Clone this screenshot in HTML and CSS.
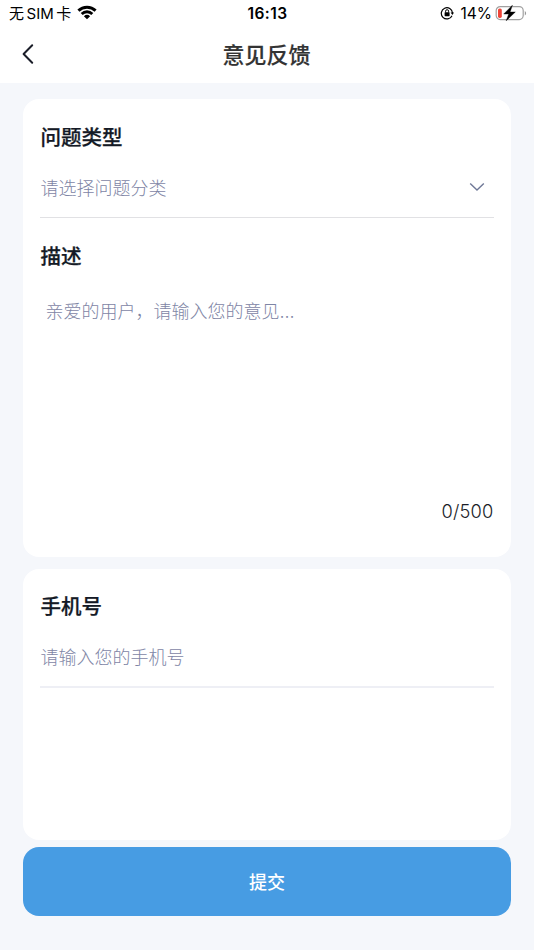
FILE: index.html
```html
<!DOCTYPE html>
<html lang="zh-CN">
<head>
<meta charset="utf-8">
<title>意见反馈</title>
<link rel="stylesheet" href="styles.css">
</head>
<body>
<header class="top">
  <div class="status">
    <div class="status-left"><span class="carrier"><span>无</span><span>SIM</span><span>卡</span></span>
      <svg class="wifi" width="20" height="15" viewBox="0 0 20 15"><path d="M0.4 4.6a13.8 13.8 0 0 1 19.2 0l-2 2.1a11 11 0 0 0-15.2 0zM3.7 7.9a9.1 9.1 0 0 1 12.6 0l-2 2.1a6.2 6.2 0 0 0-8.6 0zM6.9 11.2a4.5 4.5 0 0 1 6.2 0L10 14.3z"/></svg>
    </div>
    <time class="clock">16:13</time>
    <div class="status-right">
      <svg class="lock" width="14" height="14" viewBox="0 0 14 14"><path d="M12 9.7A5.6 5.6 0 1 1 12.5 7" fill="none" stroke="#000" stroke-width="1.2"/><path d="M10.6 6.4h3.4l-1.6 2.5z"/><rect x="4.6" y="6.2" width="5" height="4" rx=".6"/><path d="M5.6 6.5V5.2a1.5 1.5 0 0 1 3 0v1.3" fill="none" stroke="#000"/></svg>
      <span class="percent">14%</span>
      <svg class="battery" width="32" height="16" viewBox="0 0 32 16"><rect x="1.2" y="1.6" width="27" height="13" rx="4" fill="none" stroke="#a0a0a0" stroke-width="1.2"/><rect x="3" y="3.5" width="3.8" height="9.4" rx="1.6" fill="#ef4438"/><path d="M29.8 6v4.4c1.8-.7 1.8-3.7 0-4.4z" fill="#999"/><path d="M17.4 .2L8.7 9h5L11.2 15.8 20.3 7h-5.2z" stroke="#000" stroke-width=".4"/></svg>
    </div>
  </div>
  <div class="nav">
    <svg class="back" width="14" height="22" viewBox="0 0 14 22"><path d="M12.2 2.2L3.6 11l8.6 8.8" fill="none" stroke="#1b1e29" stroke-width="2" stroke-linecap="round" stroke-linejoin="round"/></svg>
    <h1>意见反馈</h1>
  </div>
</header>
<main>
  <section class="card card-main">
    <h2>问题类型</h2>
    <div class="field"><span>请选择问题分类</span><svg class="chevron" width="16" height="10" viewBox="0 0 16 10"><path d="M1.2 1.5l6.8 6.6 6.8-6.6" fill="none" stroke="#6f7897" stroke-width="1.4"/></svg></div>
    <h2 class="desc-title">描述</h2>
    <div class="textarea">亲爱的用户，请输入您的意见...</div>
    <div class="count">0/500</div>
  </section>
  <section class="card card-phone">
    <h2>手机号</h2>
    <div class="field field-phone">请输入您的手机号</div>
  </section>
  <button class="submit">提交</button>
</main>
</body>
</html>
```
FILE: styles.css
```css
* { box-sizing: border-box; }
body { margin: 0; height: 950px; background: #f5f7fb; color: #1b1e29; font-family: Inter, "Noto Sans CJK SC", sans-serif; }
svg { display: block; }
.top { height: 83px; background: #fff; color: #000; }
.status { height: 28px; display: grid; grid-template-columns: 1fr auto 1fr; align-items: center; padding: 0 8px 0 9px; font-size: 15px; line-height: 28px; }
.status-left, .status-right { display: flex; align-items: center; }
.status-left { gap: 6px; }
.carrier { display: flex; gap: 2.5px; }
.wifi { margin-bottom: 3px; }
.lock { margin-bottom: 2px; }
.status-right { justify-content: flex-end; gap: 6px; }
.clock { font-weight: 600; font-size: 15.5px; letter-spacing: .4px; }
.percent { font-size: 15.5px; }
.battery { margin: 0 -1px 2px -3px; }
.nav { height: 52px; display: grid; grid-template-columns: 40px 1fr 40px; align-items: center; padding: 0 20.5px 0 19.5px; }
h1 { margin: 0; padding-top: 2px; text-align: center; font-size: 22px; font-weight: 500; line-height: 32px; color: #333; -webkit-text-stroke: .2px #333; }
main { padding: 16px 23.4px 0; }
.card { background: #fff; border-radius: 16px; padding: 24px 17px 0; }
.card-main { height: 458px; }
.card-phone { height: 271px; margin-top: 12px; padding-top: 23px; }
h2 { margin: 0; font-size: 20.5px; line-height: 30px; font-weight: 500; color: #141a26; -webkit-text-stroke: .25px #141a26; }
.field { height: 65px; display: flex; align-items: center; justify-content: space-between; padding: 4px 9px 0 0; border-bottom: 1px solid #e1e1e4; color: #7e85a5; font-size: 18px; font-weight: 300; }
.field-phone { height: 66px; padding-top: 3px; border-bottom: 2px solid #eeeff5; }
.desc-title { margin-top: 24px; }
.textarea { height: 224px; padding: 26px 5px 0; color: #7e85a5; font-size: 18px; font-weight: 300; line-height: 27px; }
.count { text-align: right; font-size: 18.3px; font-weight: 300; line-height: 30px; letter-spacing: .2px; }
.submit { display: block; width: 100%; height: 69px; margin-top: 7px; border: 0; border-radius: 16px; background: #479ce3; color: #fff; padding: 0 0 2px; font: 500 18px "Noto Sans CJK SC", sans-serif; }
```
